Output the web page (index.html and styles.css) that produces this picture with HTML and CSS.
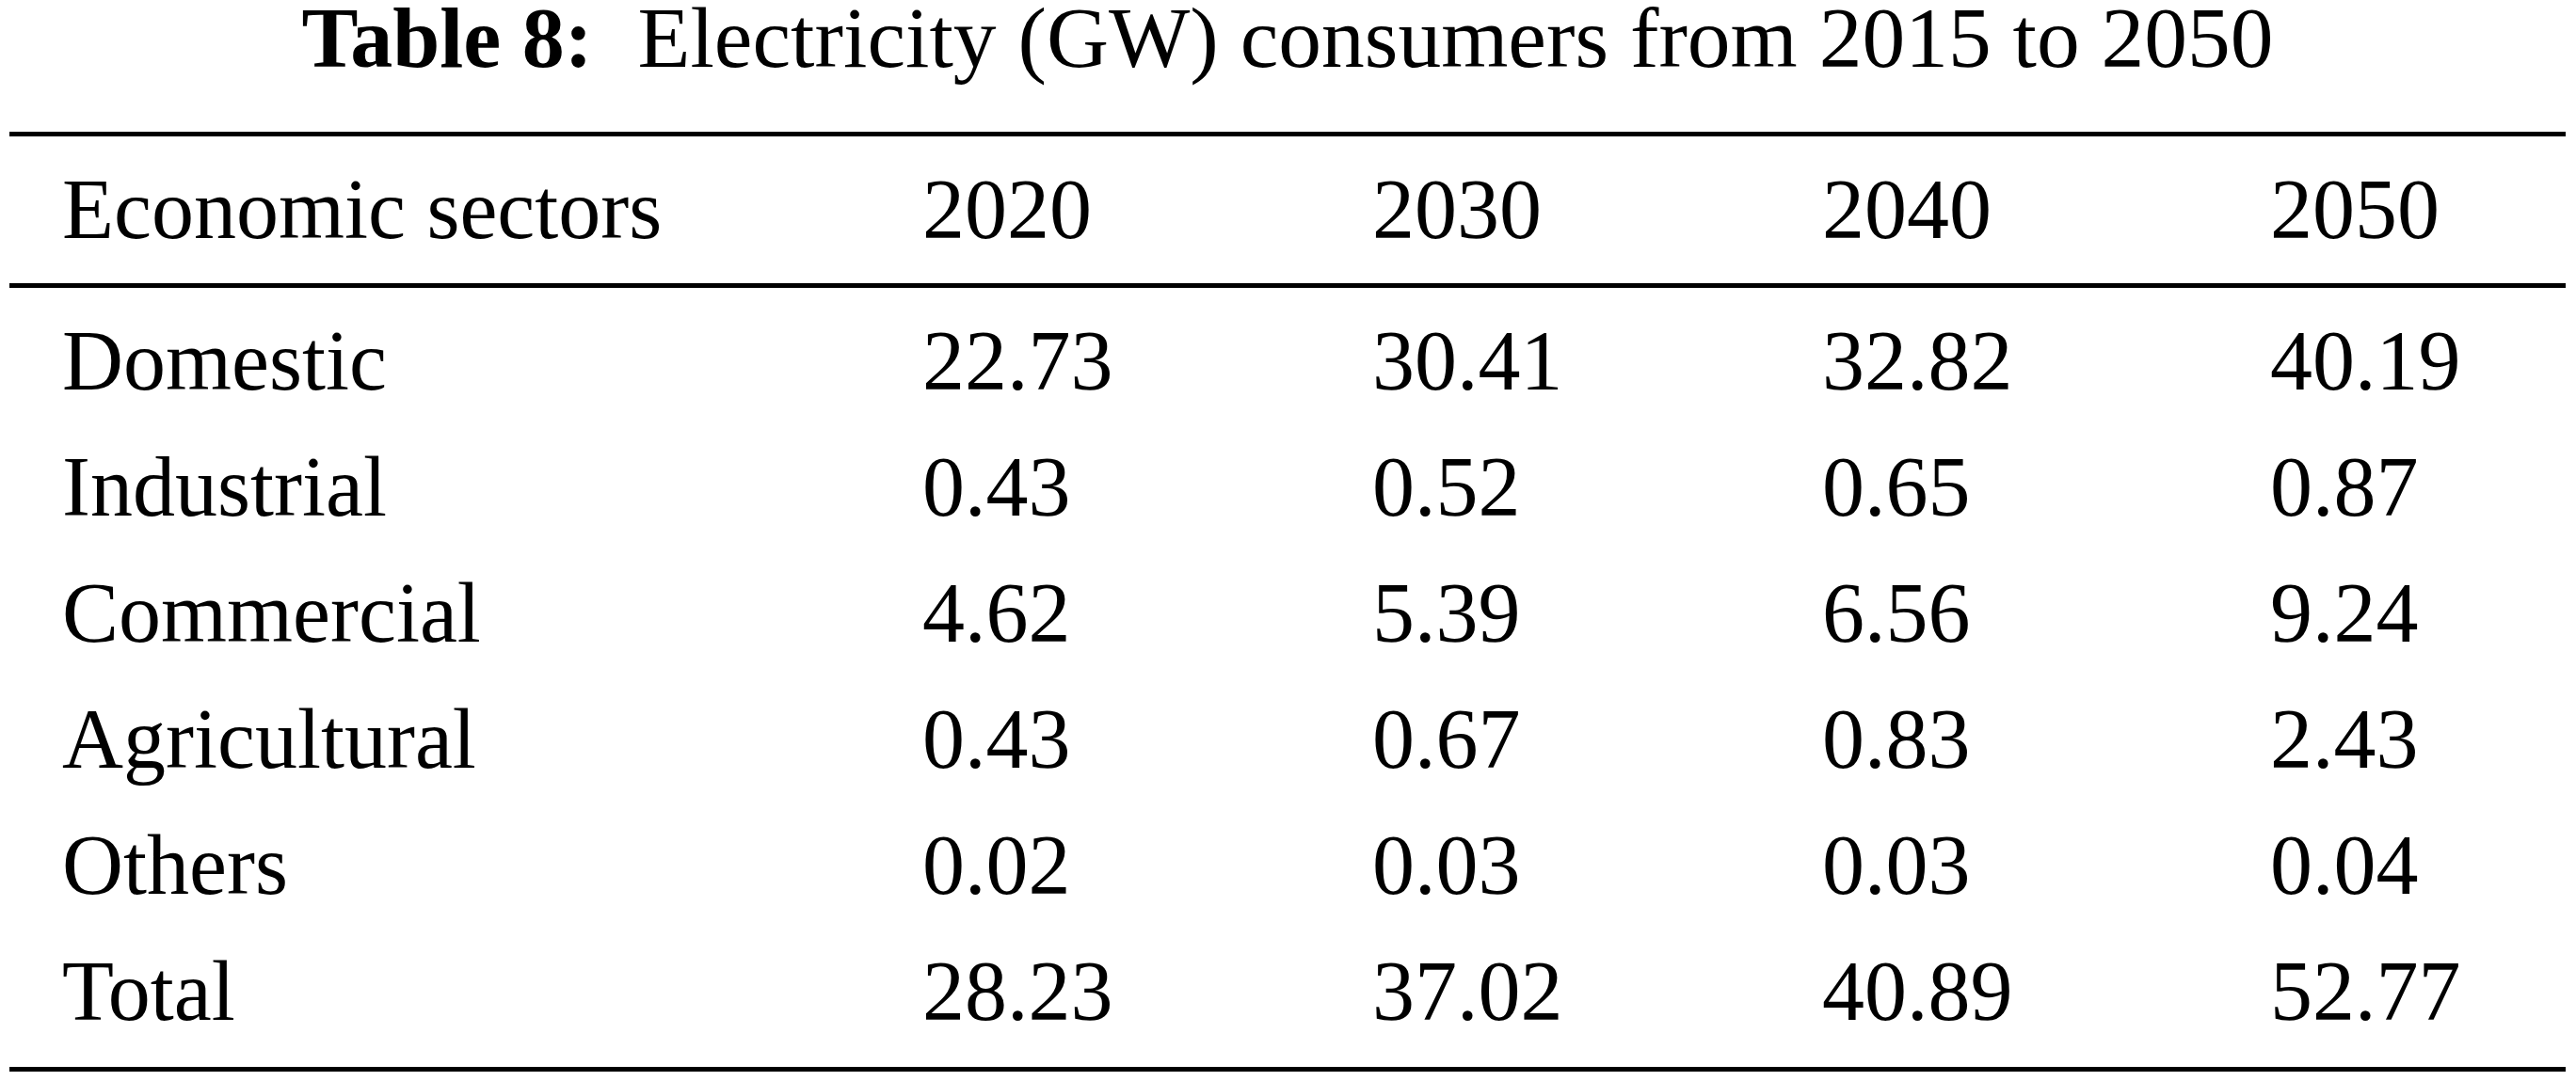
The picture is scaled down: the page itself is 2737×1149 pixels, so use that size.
FILE: index.html
```html
<!DOCTYPE html>
<html lang="en">
<head>
<meta charset="utf-8">
<title>Table 8</title>
<link rel="stylesheet" href="styles.css">
</head>
<body>
<div class="page">
  <div class="caption"><span class="label">Table 8:</span> Electricity (GW) consumers from 2015 to 2050</div>
  <div class="table">
    <div class="thead">
      <div class="row"><span>Economic sectors</span><span>2020</span><span>2030</span><span>2040</span><span>2050</span></div>
    </div>
    <div class="tbody">
      <div class="row"><span>Domestic</span><span>22.73</span><span>30.41</span><span>32.82</span><span>40.19</span></div>
      <div class="row"><span>Industrial</span><span>0.43</span><span>0.52</span><span>0.65</span><span>0.87</span></div>
      <div class="row"><span>Commercial</span><span>4.62</span><span>5.39</span><span>6.56</span><span>9.24</span></div>
      <div class="row"><span>Agricultural</span><span>0.43</span><span>0.67</span><span>0.83</span><span>2.43</span></div>
      <div class="row"><span>Others</span><span>0.02</span><span>0.03</span><span>0.03</span><span>0.04</span></div>
      <div class="row"><span>Total</span><span>28.23</span><span>37.02</span><span>40.89</span><span>52.77</span></div>
    </div>
  </div>
</div>
</body>
</html>
```

FILE: styles.css
```css
html, body {
  margin: 0;
  padding: 0;
  background: #ffffff;
}

body {
  font-family: "Liberation Serif", "Times New Roman", serif;
  color: #000000;
  font-size: 90px;
}

.page {
  width: 2716px;
  margin-left: 10px;
}

.caption {
  text-align: center;
  font-size: 91.5px;
  line-height: 80px;
  height: 80px;
  margin-bottom: 60px;
  white-space: nowrap;
}

.label {
  font-weight: bold;
  font-size: 90px;
  margin-right: 25px;
}

.table {
  border-top: 5px solid #000000;
  border-bottom: 5px solid #000000;
}

.thead {
  border-bottom: 5px solid #000000;
  padding: 11px 0 11px 0;
}

.tbody {
  padding: 11px 0 13px 0;
}

.row {
  display: grid;
  grid-template-columns: 914px 478px 478px 476px 1fr;
  padding-left: 56px;
  line-height: 134px;
  height: 134px;
  white-space: nowrap;
}
```
